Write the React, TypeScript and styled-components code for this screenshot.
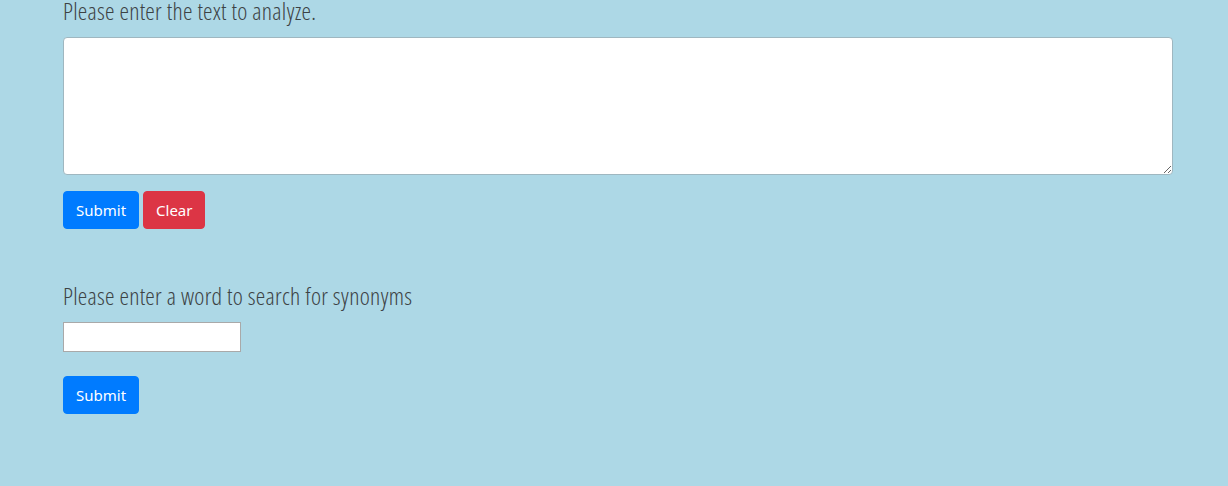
import React from "react";
import styled, { createGlobalStyle } from "styled-components";

const GlobalStyle = createGlobalStyle`
  html, body {
    margin: 0;
    padding: 0;
    background: #add8e6;
    overflow: hidden;
  }
  body {
    font-family: "Open Sans", "Noto Sans", sans-serif;
  }
`;

const Page = styled.div`
  width: 1228px;
  height: 486px;
  box-sizing: border-box;
  padding-left: 63px;
  background: #add8e6;
`;

const Section = styled.div<{ $top?: number }>`
  display: flex;
  flex-direction: column;
  align-items: flex-start;
  margin-top: ${(p) => p.$top ?? 0}px;
`;

const Label = styled.label`
  display: block;
  font-family: "Open Sans", sans-serif;
  font-weight: 300;
  font-stretch: 75%;
  font-size: 24px;
  letter-spacing: 0.25px;
  line-height: 21px;
  color: #3c4244;
  margin-bottom: 16px;
`;

const TextArea = styled.textarea`
  width: 1110px;
  height: 138px;
  box-sizing: border-box;
  border: 1px solid #9fb7c0;
  border-radius: 4px;
  background: #fff;
  padding: 6px 12px;
  font-family: "Open Sans", sans-serif;
  font-size: 16px;
  outline: none;
  resize: vertical;
`;

const WordInput = styled.input`
  width: 178px;
  height: 30px;
  box-sizing: border-box;
  border: 1px solid #a9a9a9;
  border-radius: 0;
  background: #fff;
  padding: 2px 4px;
  outline: none;
`;

const ButtonRow = styled.div<{ $top: number }>`
  display: flex;
  gap: 4px;
  margin-top: ${(p) => p.$top}px;
`;

const Button = styled.button<{ $variant?: "primary" | "danger" }>`
  height: 38px;
  box-sizing: border-box;
  padding: 0 12px;
  border-radius: 4px;
  border: 1px solid ${(p) => (p.$variant === "danger" ? "#dc3545" : "#007bff")};
  background: ${(p) => (p.$variant === "danger" ? "#dc3545" : "#007bff")};
  color: #fff;
  font-family: "Noto Sans", "Open Sans", sans-serif;
  font-size: 15px;
  line-height: 1.5;
  cursor: pointer;
`;

export default function App() {
  return (
    <>
      <GlobalStyle />
      <Page>
        <Section>
          <Label>Please enter the text to analyze.</Label>
          <TextArea />
          <ButtonRow $top={16}>
            <Button $variant="primary">Submit</Button>
            <Button $variant="danger">Clear</Button>
          </ButtonRow>
        </Section>
        <Section $top={56}>
          <Label>Please enter a word to search for synonyms</Label>
          <WordInput type="text" />
          <ButtonRow $top={24}>
            <Button $variant="primary">Submit</Button>
          </ButtonRow>
        </Section>
      </Page>
    </>
  );
}
